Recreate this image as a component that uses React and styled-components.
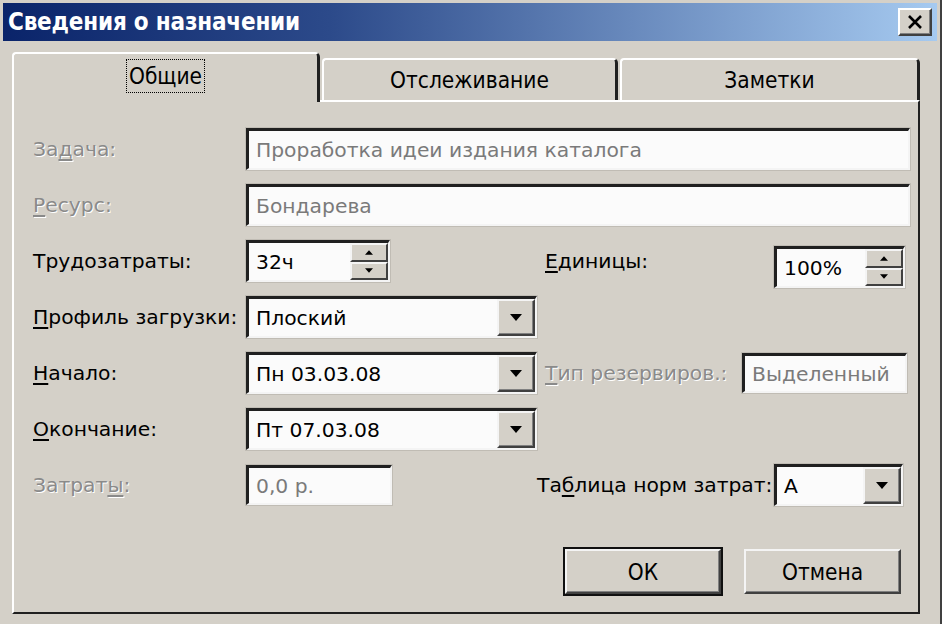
import React from "react";
import styled, { createGlobalStyle } from "styled-components";

const GlobalStyle = createGlobalStyle`
	html, body {
		margin: 0;
		padding: 0;
		background: #d4d0c8;
	}
	* {
		box-sizing: border-box;
	}
`

const Window = styled.div`
	width: 942px;
	height: 624px;
	background: #d4d0c8;
	padding: 3px 3px 0 3px;
	display: flex;
	flex-direction: column;
	font-family: "DejaVu Sans", "Liberation Sans", sans-serif;
	font-size: 20.3px;
	color: #000;
	border-right: 2px solid #404040;
`

const TitleBar = styled.div`
	height: 38px;
	display: flex;
	align-items: center;
	justify-content: space-between;
	padding: 0 5px 0 5px;
	background: linear-gradient(to right, #0a246a 0%, #2c4a8a 35%, #a6caf0 100%);
`

const Title = styled.span`
	color: #fff;
	font-family: "DejaVu Sans Condensed", "DejaVu Sans", sans-serif;
	font-stretch: condensed;
	font-weight: 700;
	font-size: 24px;
	letter-spacing: -0.2px;
`

const CloseButton = styled.div`
	width: 34px;
	height: 28px;
	display: grid;
	place-items: center;
	background: #d4d0c8;
	border: 2px solid;
	border-color: #fff #404040 #404040 #fff;
	box-shadow: inset -1px -1px 0 #808080;
`

const Body = styled.div`
	flex: 1;
	display: flex;
	flex-direction: column;
	padding: 9px 17px 10px 9px;
`

const TabStrip = styled.div`
	display: flex;
	align-items: flex-end;
	height: 50px;
	gap: 2px;
	position: relative;
	z-index: 1;
`

const Tab = styled.div`
	width: ${p => p.$width}px;
	height: ${p => p.$active ? 50 : 42}px;
	margin-bottom: ${p => p.$active ? -2 : 0}px;
	display: flex;
	align-items: center;
	justify-content: center;
	padding-bottom: ${p => p.$active ? 4 : 0}px;
	background: #d4d0c8;
	border-top: 2px solid #fff;
	border-left: 2px solid #fff;
	border-right: 3px solid #202020;
	border-radius: 4px 5px 0 0;
	font-family: "DejaVu Sans Condensed", "DejaVu Sans", sans-serif;
	font-size: 22.5px;
`

const TabLabel = styled.span`
	padding: 3px 2px;
	outline: ${p => p.$focus ? "1px dotted #000" : "none"};
`

const Panel = styled.div`
	flex: 1;
	display: flex;
	flex-direction: column;
	border: 2px solid;
	border-color: #fff #202020 #202020 #fff;
	padding: 26px 8px 0 19px;
`

const Form = styled.div`
	display: flex;
	flex-direction: column;
	gap: 14px;
`

const Row = styled.div`
	height: 42px;
	display: flex;
	align-items: center;
`

const LeftGroup = styled.div`
	width: 504px;
	height: 100%;
	display: flex;
	align-items: center;
	flex-shrink: 0;
`

const RightGroup = styled.div`
	flex: 1;
	display: flex;
	align-items: center;
	height: 100%;
`

const Label = styled.span`
	width: ${p => p.$width ? `${p.$width}px` : "auto"};
	padding-left: ${p => p.$indent || 0}px;
	flex-shrink: 0;
	white-space: nowrap;
	color: ${p => p.$disabled ? "#8a8a8a" : "#000"};
	text-shadow: ${p => p.$disabled ? "1px 1px 0 #fff" : "none"};
	u {
		text-decoration: underline;
		text-underline-offset: 3px;
	}
`

const Field = styled.div`
	width: ${p => p.$width ? `${p.$width}px` : "auto"};
	flex: ${p => p.$width ? "none" : 1};
	height: ${p => p.$height || 42}px;
	margin-left: ${p => p.$push ? "auto" : "0"};
	margin-right: ${p => p.$right || 0}px;
	margin-top: ${p => p.$shift || 0}px;
	display: flex;
	align-items: stretch;
	background: #fbfbfb;
	border-top: 3px solid #202020;
	border-left: 3px solid #202020;
	border-bottom: 2px solid #f4f4f4;
	border-right: 2px solid #f4f4f4;
	box-shadow: 0 0 0 1px #c0bcb4;
`

const FieldText = styled.span`
	flex: 1;
	display: flex;
	align-items: center;
	padding-left: 7px;
	white-space: nowrap;
	overflow: hidden;
	color: ${p => p.$disabled ? "#7a7a7a" : "#000"};
`

const DropButton = styled.div`
	width: 38px;
	display: grid;
	place-items: center;
	background: #d4d0c8;
	border: 2px solid;
	border-color: #f4f4f4 #404040 #404040 #f4f4f4;
	box-shadow: inset -1px -1px 0 #808080;
`

const SpinColumn = styled.div`
	width: 38px;
	display: flex;
	flex-direction: column;
`

const SpinButton = styled.div`
	flex: 1;
	display: grid;
	place-items: center;
	background: #d4d0c8;
	border: 2px solid;
	border-color: #f4f4f4 #404040 #404040 #f4f4f4;
`

const ButtonRow = styled.div`
	display: flex;
	justify-content: flex-end;
	gap: 23px;
	margin-top: 43px;
	padding-right: 9px;
`

const Button = styled.div`
	width: ${p => p.$width}px;
	height: 45px;
	display: grid;
	place-items: center;
	background: #d4d0c8;
	border: 2px solid;
	border-color: #f4f4f4 #404040 #404040 #f4f4f4;
	box-shadow: ${p => p.$default ? "0 0 0 2px #101010, inset -1px -1px 0 #808080" : "inset -1px -1px 0 #808080"};
	font-family: "DejaVu Sans Condensed", "DejaVu Sans", sans-serif;
	font-size: 22.5px;
`

const Arrow = ({ down = true, size = 12 }) => (
	<svg width={size} height={size / 2 + 1} viewBox="0 0 12 7">
		{down
			? <polygon points="0,0 12,0 6,7" fill="#000" />
			: <polygon points="0,7 12,7 6,0" fill="#000" />}
	</svg>
)

const Combo = ({ value, width, push, right }) => (
	<Field $width={width} $push={push} $right={right}>
		<FieldText>{value}</FieldText>
		<DropButton><Arrow /></DropButton>
	</Field>
)

const Spin = ({ value, width, push, right, shift }) => (
	<Field $width={width} $push={push} $right={right} $shift={shift}>
		<FieldText>{value}</FieldText>
		<SpinColumn>
			<SpinButton><Arrow down={false} size={8} /></SpinButton>
			<SpinButton><Arrow size={8} /></SpinButton>
		</SpinColumn>
	</Field>
)

const App = () => {
	return (
		<>
			<GlobalStyle />
			<Window>
				<TitleBar>
					<Title>Сведения о назначении</Title>
					<CloseButton>
						<svg width="16" height="14" viewBox="0 0 16 14">
							<path d="M2 1 L14 13 M14 1 L2 13" stroke="#000" strokeWidth="2.6" />
						</svg>
					</CloseButton>
				</TitleBar>
				<Body>
					<TabStrip>
						<Tab $width={308} $active><TabLabel $focus>Общие</TabLabel></Tab>
						<Tab $width={296}><TabLabel>Отслеживание</TabLabel></Tab>
						<Tab $width={300}><TabLabel>Заметки</TabLabel></Tab>
					</TabStrip>
					<Panel>
						<Form>
							<Row>
								<Label $width={213} $disabled>За<u>д</u>ача:</Label>
								<Field>
									<FieldText $disabled>Проработка идеи издания каталога</FieldText>
								</Field>
							</Row>
							<Row>
								<Label $width={213} $disabled><u>Р</u>есурс:</Label>
								<Field>
									<FieldText $disabled>Бондарева</FieldText>
								</Field>
							</Row>
							<Row>
								<LeftGroup>
									<Label $width={213}>Трудозатраты:</Label>
									<Spin value="32ч" width={144} />
								</LeftGroup>
								<RightGroup>
									<Label $indent={8}><u>Е</u>диницы:</Label>
									<Spin value="100%" width={131} push right={5} shift={12} />
								</RightGroup>
							</Row>
							<Row>
								<LeftGroup>
									<Label $width={213}><u>П</u>рофиль загрузки:</Label>
									<Combo value="Плоский" width={291} />
								</LeftGroup>
							</Row>
							<Row>
								<LeftGroup>
									<Label $width={213}><u>Н</u>ачало:</Label>
									<Combo value="Пн 03.03.08" width={291} />
								</LeftGroup>
								<RightGroup>
									<Label $indent={8} $disabled><u>Т</u>ип резервиров.:</Label>
									<Field $width={165} $push $right={3} $height={40}>
										<FieldText $disabled>Выделенный</FieldText>
									</Field>
								</RightGroup>
							</Row>
							<Row>
								<LeftGroup>
									<Label $width={213}><u>О</u>кончание:</Label>
									<Combo value="Пт 07.03.08" width={291} />
								</LeftGroup>
							</Row>
							<Row>
								<LeftGroup>
									<Label $width={213} $disabled>Затрат<u>ы</u>:</Label>
									<Field $width={146} $height={40}>
										<FieldText $disabled>0,0 р.</FieldText>
									</Field>
								</LeftGroup>
								<RightGroup>
									<Label>Та<u>б</u>лица норм затрат:</Label>
									<Combo value="А" width={129} push right={7} />
								</RightGroup>
							</Row>
						</Form>
						<ButtonRow>
							<Button $width={156} $default>ОК</Button>
							<Button $width={157}>Отмена</Button>
						</ButtonRow>
					</Panel>
				</Body>
			</Window>
		</>
	)
}

export default App
